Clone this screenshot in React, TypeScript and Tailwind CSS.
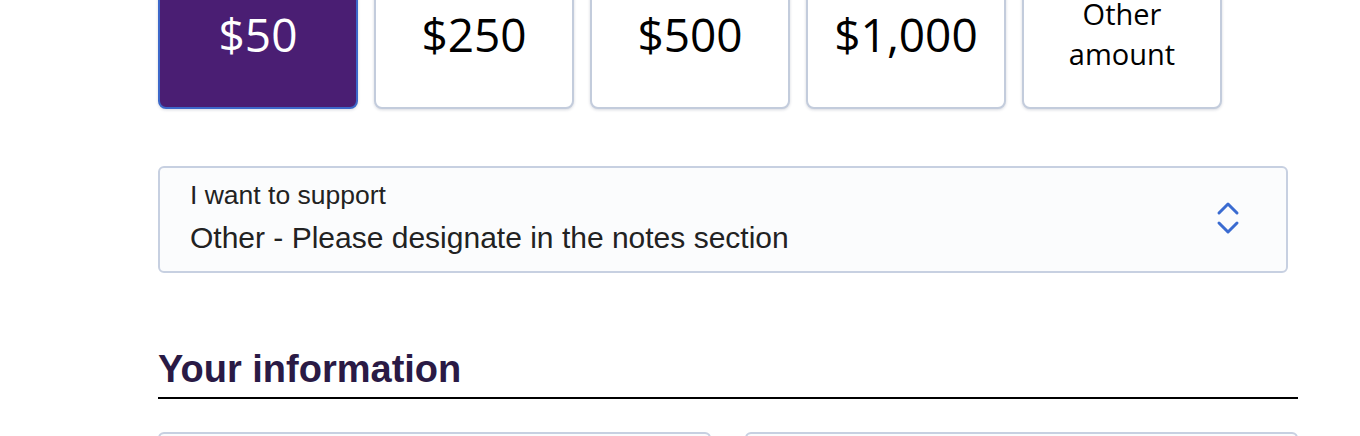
import { useState } from 'react';

const AMOUNTS = ['$50', '$250', '$500', '$1,000', 'Other amount'];

export default function App() {
  const [selected, setSelected] = useState('$50');

  return (
    <div className="h-[436px] w-full overflow-hidden bg-white" style={{ fontFamily: '"Liberation Sans", Arial, sans-serif' }}>
      <div className="ml-[158px] w-[1140px]">
        {/* Amount buttons */}
        <div className="mt-[-30px] flex gap-4">
          {AMOUNTS.map(a => {
            const isSel = selected === a;
            const isOther = a === 'Other amount';
            return (
              <button
                key={a}
                onClick={() => setSelected(a)}
                className={`flex h-[139px] w-[200px] items-center justify-center rounded-lg border-2 pb-[12px] shadow-[0_1px_3px_rgba(30,40,80,0.18)] ${
                  isSel ? 'border-[#3d68c9] bg-[#4a1e73] text-white' : 'border-[#c3ccdc] bg-white text-black'
                }`}
                style={{ fontFamily: '"Open Sans", sans-serif' }}
              >
                {isOther ? (
                  <span className="w-[130px] text-[29px] leading-[40px]">Other amount</span>
                ) : (
                  <span className="text-[46px] leading-none">{a}</span>
                )}
              </button>
            );
          })}
        </div>

        {/* Designation select */}
        <div className="mt-[57px] flex h-[107px] w-[1130px] items-center justify-between rounded-md border-2 border-[#c7d0e1] bg-[#fbfcfd] pb-[4px] pl-[30px] pr-[46px]">
          <div className="flex flex-col">
            <span className="text-[26.5px] leading-[30px] text-[#222]">I want to support</span>
            <span className="mt-[11px] text-[30px] leading-[34px] text-[#222]">Other - Please designate in the notes section</span>
          </div>
          <svg width="24" height="34" viewBox="0 0 24 34" fill="none" stroke="#3a6bd1" strokeWidth="3" strokeLinecap="round" strokeLinejoin="round">
            <path d="M3 12 L12 3 L21 12" />
            <path d="M3 22 L12 31 L21 22" />
          </svg>
        </div>

        {/* Section heading */}
        <h2 className="mt-[75px] border-b-2 border-black pb-[6px] text-[38px] font-bold leading-[43px] text-[#2a1a45]">
          Your information
        </h2>

        {/* Input fields */}
        <div className="mt-[33px] grid grid-cols-2 gap-[34px]">
          <div className="h-[60px] rounded-md border-2 border-[#c7d0e1] bg-[#fbfcfd]" />
          <div className="h-[60px] rounded-md border-2 border-[#c7d0e1] bg-[#fbfcfd]" />
        </div>
      </div>
    </div>
  );
}
